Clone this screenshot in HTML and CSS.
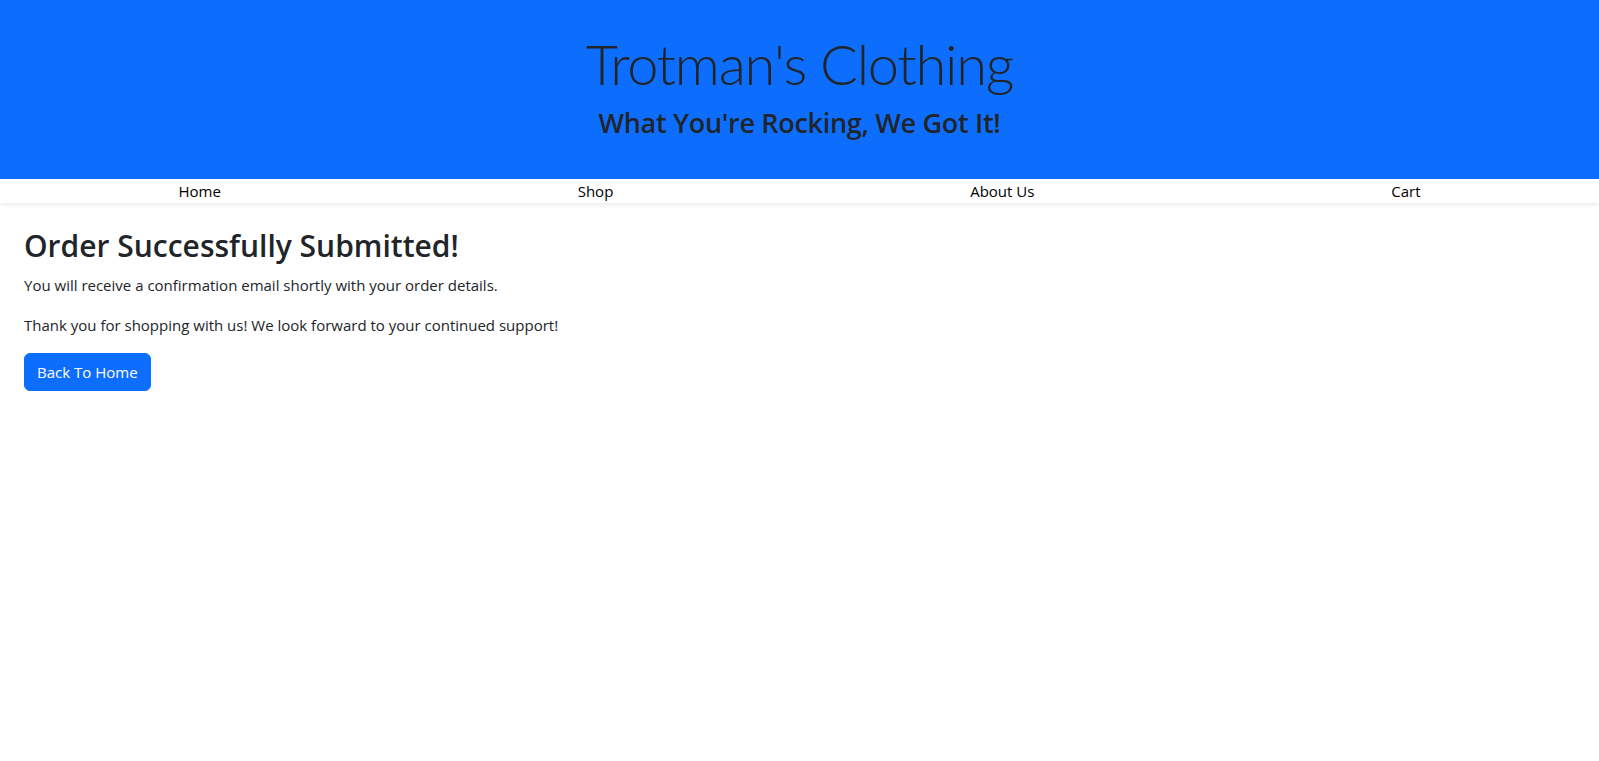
FILE: index.html
```html
<!DOCTYPE html>
<html lang="en">
<head>
<meta charset="utf-8">
<title>Order Submitted - Trotman's Clothing</title>
<link rel="stylesheet" href="styles.css">
</head>
<body>
<header class="site-header">
  <h1 class="brand">Trotman's Clothing</h1>
  <h3 class="tagline">What You're Rocking, We Got It!</h3>
</header>
<nav class="site-nav">
  <a href="#">Home</a>
  <a href="#">Shop</a>
  <a href="#">About Us</a>
  <a href="#">Cart</a>
</nav>
<main class="content">
  <h2 class="title">Order Successfully Submitted!</h2>
  <p>You will receive a confirmation email shortly with your order details.</p>
  <p>Thank you for shopping with us! We look forward to your continued support!</p>
  <a href="#" class="btn">Back To Home</a>
</main>
</body>
</html>
```
FILE: styles.css
```css
* { box-sizing: border-box; }
html, body { margin: 0; padding: 0; }
body {
  font-family: "Open Sans", "Noto Sans", sans-serif;
  font-size: 16px;
  line-height: 1.5;
  color: #212529;
  background: #fff;
}
.site-header {
  background: #0d6efd;
  height: 179px;
  display: flex;
  flex-direction: column;
  align-items: center;
  padding-top: 26px;
}
.brand {
  margin: 0;
  font-family: "Lato", "Open Sans", sans-serif;
  font-size: 56px;
  font-weight: 300;
  line-height: 76px;
  letter-spacing: -1.2px;
  color: #212529;
}
.tagline {
  margin: 4px 0 0;
  font-size: 27px;
  font-weight: 600;
  line-height: 34px;
  color: #212529;
  letter-spacing: -0.3px;
}
.site-nav {
  display: flex;
  justify-content: space-around;
  height: 24px;
  background: #fff;
  box-shadow: 0 2px 4px rgba(0,0,0,0.08);
  position: relative;
}
.site-nav a {
  color: #000;
  text-decoration: none;
  font-size: 15px;
  line-height: 24px;
}
.content {
  padding: 24px;
}
.title {
  margin: 0 0 8px;
  font-size: 30px;
  font-weight: 600;
  line-height: 38px;
}
.content p {
  margin: 0 0 16px;
  font-size: 15px;
  line-height: 24px;
}
.btn {
  display: inline-block;
  background: #0d6efd;
  color: #fff;
  text-decoration: none;
  font-size: 15px;
  line-height: 24px;
  padding: 6px 12px;
  border: 1px solid #0d6efd;
  border-radius: 6px;
}
```
